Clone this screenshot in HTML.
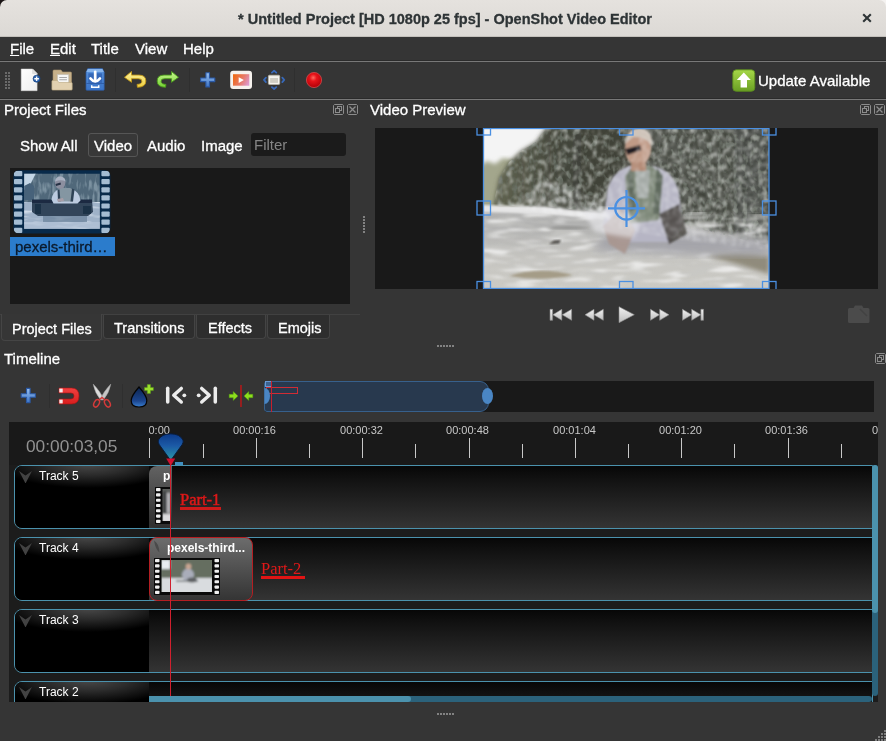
<!DOCTYPE html>
<html>
<head>
<meta charset="utf-8">
<title>* Untitled Project [HD 1080p 25 fps] - OpenShot Video Editor</title>
<style>
html,body{margin:0;padding:0;}
body{width:886px;height:741px;overflow:hidden;background:#353535;position:relative;font-family:"Liberation Sans",sans-serif;font-size:15px;color:#fff;}
.abs{position:absolute;}
.t{position:absolute;white-space:nowrap;line-height:1;-webkit-text-stroke:0.300px currentColor;will-change:transform;}
/* title bar */
#corner{left:0;top:0;width:886px;height:20px;background:linear-gradient(90deg,#1a1414 0,#1a1414 50%,#f4f2f0 50%);}
#titlebar{left:0;top:0;width:886px;height:37px;background:linear-gradient(#e5e2de,#dcd9d5);border-radius:7px 7px 0 0;border-bottom:1px solid #c3c0bb;box-sizing:border-box;}
#title{left:1.500px;width:886px;top:12px;text-align:center;font-weight:bold;font-size:14.500px;color:#2e3436;}
#close{left:858px;top:8px;font-size:20px;color:#2e3436;font-weight:bold;}
/* menu */
#menubar{left:0;top:37px;width:886px;height:24px;background:#353535;}
.menu{top:41px;font-size:15px;color:#fff;}
.hl{left:0;width:886px;height:1px;background:#787878;box-shadow:0 -1px 0 #2b2b2b;}
/* docks */
.dtitle{font-size:15px;color:#fff;}
#filesbox{left:10px;top:168px;width:340px;height:136px;background:#191919;}
#previewbox{left:375px;top:128px;width:503px;height:161px;background:#191919;}
.tab{position:absolute;top:316px;height:25px;box-sizing:border-box;border:1px solid #4a4a4a;border-top:none;font-size:14px;color:#fff;text-align:center;line-height:24px;background:#353535;}
/* timeline */
#tl .t{-webkit-text-stroke:0;}
#tl{left:9px;top:422px;width:869px;height:280px;background:#1c1c1c;overflow:hidden;}
#ruler{left:0;top:0;width:869px;height:43px;background:#191919;}
.rl{will-change:transform;position:absolute;top:2px;font-size:11px;color:#c8c8c8;white-space:nowrap;}
.tick{position:absolute;width:1px;background:#c8c8c8;}
.track{position:absolute;left:5px;width:859px;height:64px;box-sizing:border-box;border:1px solid #4b92ad;border-radius:8px 0 0 8px;background:linear-gradient(#070707 0%,#121212 22%,#343434 100%);}
.tname{position:absolute;left:0;top:0;width:134px;height:62px;background:radial-gradient(ellipse 90px 24px at 55% -2px,#4a4a4a 0,#2c2c2c 45%,#000 100%),#000;border-radius:7px 0 0 7px;}
.tname span{will-change:transform;position:absolute;left:24px;top:3px;font-size:12px;color:#fff;}
.tname i{position:absolute;left:4px;top:5px;width:13px;height:12px;background:#424242;clip-path:polygon(0 0,50% 38%,100% 0,52% 100%,48% 100%);}
.clip{position:absolute;box-sizing:border-box;border-radius:8px;background:linear-gradient(#6a6a6a,#2c2c2c);overflow:hidden;}
.note{will-change:transform;position:absolute;font-family:"Liberation Serif",serif;font-size:16.500px;color:#e01818;white-space:nowrap;line-height:1;}
</style>
</head>
<body>
<div class="abs" id="corner"></div>
<div class="abs" id="titlebar"></div>
<div class="t" id="title">* Untitled Project [HD 1080p 25 fps] - OpenShot Video Editor</div>
<svg class="abs" style="left:861px;top:12px" width="12" height="12" viewBox="0 0 12 12"><path d="M2.200 2.200l7.600 7.600M9.800 2.200l-7.600 7.600" stroke="#2e3436" stroke-width="2.100"/></svg>

<div class="abs" id="menubar"></div>
<div class="t menu" style="left:10px"><u>F</u>ile</div>
<div class="t menu" style="left:50px"><u>E</u>dit</div>
<div class="t menu" style="left:91px">Title</div>
<div class="t menu" style="left:135px">View</div>
<div class="t menu" style="left:183px">Help</div>
<div class="abs hl" style="top:61px"></div>
<div class="abs hl" style="top:99px"></div>

<!-- toolbar -->

<!-- toolbar grip -->
<svg class="abs" style="left:4px;top:71px" width="8" height="20" viewBox="0 0 8 20">
<g fill="#6a6a6a"><rect x="1" y="1" width="2" height="2"/><rect x="4" y="1" width="2" height="2"/><rect x="1" y="4" width="2" height="2"/><rect x="4" y="4" width="2" height="2"/><rect x="1" y="7" width="2" height="2"/><rect x="4" y="7" width="2" height="2"/><rect x="1" y="10" width="2" height="2"/><rect x="4" y="10" width="2" height="2"/><rect x="1" y="13" width="2" height="2"/><rect x="4" y="13" width="2" height="2"/><rect x="1" y="16" width="2" height="2"/><rect x="4" y="16" width="2" height="2"/></g></svg>
<!-- new -->
<svg class="abs" style="left:18px;top:67px" width="26" height="26" viewBox="0 0 26 26">
<defs><linearGradient id="gdoc" x1="0" y1="0" x2="1" y2="1"><stop offset="0" stop-color="#ffffff"/><stop offset="1" stop-color="#efefef"/></linearGradient></defs>
<path d="M3.200 2h11.400l4.500 4.500v17.200h-15.900z" fill="url(#gdoc)" stroke="#d8d8d8" stroke-width="0.500"/>
<path d="M14.600 2v4.500h4.500z" fill="#e0e0e0" stroke="#c8c8c8" stroke-width="0.400"/>
<circle cx="18.600" cy="11.700" r="3.500" fill="#2c62ac" stroke="#1a4684" stroke-width="0.700"/>
<path d="M16.300 11.700h4.600M18.600 9.400v4.600" stroke="#fff" stroke-width="1.400"/>
</svg>
<!-- open -->
<svg class="abs" style="left:50px;top:67px" width="26" height="26" viewBox="0 0 26 26">
<path d="M3 4q0-1 1-1h7l1.500 2h8q1 0 1 1v14h-18.500z" fill="#c7b18b" stroke="#a8926c" stroke-width="0.600"/>
<rect x="7.600" y="7.700" width="11" height="8.500" fill="#f6f6f4" stroke="#c4c4c0" stroke-width="0.500"/>
<path d="M9.300 10.500h7.600M9.300 12.800h7.600" stroke="#a8a8a8" stroke-width="1.100"/>
<path d="M1.900 14.300q0-0.800 0.800-0.800h4.800l1.300 2h12.600q0.800 0 0.800 0.800v6q0 0.800-0.800 0.800h-18.700q-0.800 0-0.800-0.800z" fill="#e2d1b0" stroke="#bba780" stroke-width="0.600"/>
</svg>
<!-- save -->
<svg class="abs" style="left:83px;top:67px" width="26" height="26" viewBox="0 0 26 26">
<defs><linearGradient id="gsave" x1="0" y1="0" x2="0" y2="1"><stop offset="0" stop-color="#5a94de"/><stop offset="1" stop-color="#3a74c6"/></linearGradient></defs>
<path d="M4.800 1.600h14.600l1.800 3.600v17.300q0 0.800-0.800 0.800h-16.600q-0.800 0-0.800-0.800v-17.300z" fill="url(#gsave)" stroke="#2c5aa4" stroke-width="0.700"/>
<path d="M4.800 1.900h14.600l1.500 3.100h-17.600z" fill="#86b4ec"/>
<rect x="5.300" y="6.300" width="13.800" height="9.600" fill="#3568b8"/>
<rect x="5.300" y="17.100" width="13.800" height="5" fill="#3f78ca"/>
<path d="M3.400 16.500h17.600" stroke="#2a56a0" stroke-width="0.800"/>
<path d="M12.200 4.800v9" stroke="#fff" stroke-width="2.700" stroke-linecap="round"/>
<path d="M7.400 11.400q4.800 6 9.600 0" fill="none" stroke="#fff" stroke-width="2.600" stroke-linecap="round"/>
<path d="M8.700 18.200v2.100h7v-2.100" fill="none" stroke="#fff" stroke-width="1.500"/>
</svg>
<div class="abs" style="left:115px;top:68px;width:1px;height:24px;background:#2f2f2f"></div>
<!-- undo -->
<svg class="abs" style="left:122px;top:67px" width="26" height="26" viewBox="0 0 26 26">
<defs><linearGradient id="gundo" x1="0" y1="0" x2="0" y2="1"><stop offset="0" stop-color="#fdf3a0"/><stop offset="1" stop-color="#efcf3e"/></linearGradient></defs>
<path d="M2.500 10.300l7-5.800v3.600h7.500q6.800 0 6.800 6q0 6-8.300 6.200l-0.400-2.900q4.800 0 4.800-3.300q0-2.400-3.700-2.400h-6.700v3.600z" fill="url(#gundo)" stroke="#c49a1a" stroke-width="0.900" stroke-linejoin="round"/>
</svg>
<!-- redo -->
<svg class="abs" style="left:155px;top:67px" width="26" height="26" viewBox="0 0 26 26">
<defs><linearGradient id="gredo" x1="0" y1="0" x2="0" y2="1"><stop offset="0" stop-color="#c9f790"/><stop offset="1" stop-color="#74d032"/></linearGradient></defs>
<path d="M23.500 10.300l-7-5.800v3.600h-7.500q-6.800 0-6.800 6q0 6 8.300 6.200l0.400-2.900q-4.800 0-4.800-3.300q0-2.400 3.700-2.400h6.700v3.600z" fill="url(#gredo)" stroke="#4c9c1c" stroke-width="0.900" stroke-linejoin="round"/>
</svg>
<div class="abs" style="left:189px;top:68px;width:1px;height:24px;background:#2f2f2f"></div>
<!-- plus -->
<svg class="abs" style="left:197px;top:69px" width="22" height="22" viewBox="0 0 22 22">
<defs><linearGradient id="gplus" x1="0" y1="0" x2="0" y2="1"><stop offset="0" stop-color="#98c0f0"/><stop offset="1" stop-color="#3d74c4"/></linearGradient></defs>
<path d="M8.900 3.700h3.600v5.300h5.300v3.600h-5.300v5.300h-3.600v-5.300h-5.300v-3.600h5.300z" fill="url(#gplus)" stroke="#2a58a4" stroke-width="1.100" stroke-linejoin="round"/>
</svg>
<!-- profile -->
<svg class="abs" style="left:228px;top:67px" width="26" height="26" viewBox="0 0 26 26">
<defs><linearGradient id="gprof" x1="0" y1="0.300" x2="1" y2="0.700"><stop offset="0" stop-color="#ee6a18"/><stop offset="0.550" stop-color="#e87a6a"/><stop offset="1" stop-color="#dd98cc"/></linearGradient></defs>
<rect x="2.200" y="3.700" width="21.800" height="18.200" rx="3" fill="#f6f2ee"/>
<rect x="5" y="7.200" width="16.300" height="11.500" fill="url(#gprof)"/>
<path d="M10.700 10.200v5.800l5.200-2.900z" fill="#fff"/>
</svg>
<!-- fullscreen -->
<svg class="abs" style="left:261px;top:67px" width="26" height="26" viewBox="0 0 26 26">
<rect x="7.400" y="8.200" width="11.300" height="9.300" rx="1" fill="#f0eee6" stroke="#b9b7ad" stroke-width="0.700"/>
<rect x="8.800" y="10.600" width="8.500" height="5.600" fill="#cfcdc4" stroke="#fff" stroke-width="0.600"/>
<g fill="none" stroke="#3768b8" stroke-width="1.800" stroke-linecap="round" stroke-linejoin="round">
<path d="M10.900 5.600l2.200-1.900l2.200 1.900"/><path d="M10.900 20.100l2.200 1.900l2.200-1.900"/><path d="M4.900 10.700l-1.900 2.200l1.900 2.200"/><path d="M21.300 10.700l1.900 2.200l-1.900 2.200"/></g>
</svg>
<div class="abs" style="left:294px;top:68px;width:1px;height:24px;background:#2f2f2f"></div>
<!-- record -->
<svg class="abs" style="left:303px;top:69px" width="22" height="22" viewBox="0 0 22 22">
<defs><radialGradient id="grec" cx="0.450" cy="0.350" r="0.650"><stop offset="0" stop-color="#ff6a60"/><stop offset="0.350" stop-color="#e8141a"/><stop offset="1" stop-color="#b00008"/></radialGradient></defs>
<circle cx="11" cy="11" r="7.600" fill="url(#grec)" stroke="#e05050" stroke-width="0.700"/>
</svg>
<!-- update -->
<svg class="abs" style="left:731px;top:68px" width="26" height="26" viewBox="0 0 26 26">
<defs><linearGradient id="gupd" x1="0" y1="0" x2="0" y2="1"><stop offset="0" stop-color="#a6d848"/><stop offset="1" stop-color="#6a9f24"/></linearGradient></defs>
<rect x="1.800" y="1.800" width="22" height="21.500" rx="3.500" fill="url(#gupd)" stroke="#5a8a1e" stroke-width="0.900"/>
<path d="M12.800 4.500l7 7.500h-3.800v7.500h-6.400v-7.500h-3.800z" fill="#fff"/>
</svg>

<div class="t" style="left:758px;top:73px;font-size:15px">Update Available</div>

<!-- Project files dock -->
<div class="t dtitle" style="left:4px;top:102px">Project Files</div>
<div class="t dtitle" style="left:370px;top:102px">Video Preview</div>
<div class="t" style="left:20px;top:138px">Show All</div>
<div class="abs" style="left:88px;top:133px;width:50px;height:24px;box-sizing:border-box;border:1px solid #565656;border-radius:3px;background:#383838"></div>
<div class="t" style="left:94px;top:138px">Video</div>
<div class="t" style="left:147px;top:138px">Audio</div>
<div class="t" style="left:201px;top:138px">Image</div>
<div class="abs" style="left:251px;top:133px;width:95px;height:23px;background:#1b1b1b;border-radius:3px"></div>
<div class="t" style="left:254px;top:137px;font-size:15px;color:#858585;-webkit-text-stroke:0">Filter</div>
<div class="abs" id="filesbox"></div>
<!-- THUMB --><svg class="abs" style="left:13px;top:170px" width="98" height="64" viewBox="0 0 98 64">
<defs><clipPath id="tc"><rect x="0.400" y="0.200" width="97" height="63.300" rx="5.500"/></clipPath><clipPath id="tci"><rect x="11.200" y="3.800" width="75.600" height="55"/></clipPath>
<filter id="tb1" x="-10%" y="-10%" width="120%" height="120%"><feGaussianBlur stdDeviation="0.650"/></filter>
<filter id="tb2" x="-10%" y="-10%" width="120%" height="120%"><feGaussianBlur stdDeviation="2"/></filter>
<filter id="twave" x="0" y="0" width="100%" height="100%"><feTurbulence type="fractalNoise" baseFrequency="0.05 0.25" numOctaves="2" seed="4"/><feColorMatrix type="matrix" values="0 0 0 0 0.80  0 0 0 0 0.86  0 0 0 0 0.93  3 3 0 0 -3"/><feGaussianBlur stdDeviation="0.500"/></filter>
<filter id="ttree" x="0" y="0" width="100%" height="100%"><feTurbulence type="fractalNoise" baseFrequency="0.25 0.08" numOctaves="2" seed="9"/><feColorMatrix type="matrix" values="0 0 0 0 0.24  0 0 0 0 0.33  0 0 0 0 0.40  3 3 0 0 -2.9"/><feGaussianBlur stdDeviation="0.500"/></filter>
</defs>
<g clip-path="url(#tc)"><rect width="98" height="64" fill="#082a4a"/><rect x="1" y="1.0" width="8.300" height="5.200" rx="1" fill="#a4bcd2"/><rect x="88.400" y="1.0" width="8.300" height="5.200" rx="1" fill="#a4bcd2"/><rect x="1" y="9.1" width="8.300" height="5.200" rx="1" fill="#a4bcd2"/><rect x="88.400" y="9.1" width="8.300" height="5.200" rx="1" fill="#a4bcd2"/><rect x="1" y="17.2" width="8.300" height="5.200" rx="1" fill="#a4bcd2"/><rect x="88.400" y="17.2" width="8.300" height="5.200" rx="1" fill="#a4bcd2"/><rect x="1" y="25.3" width="8.300" height="5.200" rx="1" fill="#a4bcd2"/><rect x="88.400" y="25.3" width="8.300" height="5.200" rx="1" fill="#a4bcd2"/><rect x="1" y="33.4" width="8.300" height="5.200" rx="1" fill="#a4bcd2"/><rect x="88.400" y="33.4" width="8.300" height="5.200" rx="1" fill="#a4bcd2"/><rect x="1" y="41.5" width="8.300" height="5.200" rx="1" fill="#a4bcd2"/><rect x="88.400" y="41.5" width="8.300" height="5.200" rx="1" fill="#a4bcd2"/><rect x="1" y="49.6" width="8.300" height="5.200" rx="1" fill="#a4bcd2"/><rect x="88.400" y="49.6" width="8.300" height="5.200" rx="1" fill="#a4bcd2"/><rect x="1" y="57.7" width="8.300" height="5.200" rx="1" fill="#a4bcd2"/><rect x="88.400" y="57.7" width="8.300" height="5.200" rx="1" fill="#a4bcd2"/>
<g clip-path="url(#tci)">
<rect x="11" y="3" width="77" height="57" fill="#50687a"/>
<rect x="11" y="3" width="77" height="30" filter="url(#ttree)" opacity="0.800"/>
<path d="M11 3h12l-3 6l-4 8l-5 3z" fill="#c4d6e6" filter="url(#tb1)"/>
<path d="M11 16l6-3l4 3v14h-10z" fill="#46627a" filter="url(#tb1)"/>
<rect x="11" y="32" width="77" height="28" fill="#9fb2c8"/>
<rect x="11" y="32" width="77" height="28" filter="url(#twave)" opacity="0.700"/>
<path d="M11 52h77v8h-77z" fill="#b4c4d8" opacity="0.700" filter="url(#tb1)"/>
<g filter="url(#tb1)">
<path d="M19 30h60l1 12l-5 4h-50l-6-4z" fill="#30445a"/>
<path d="M19 29.500h60v3.500h-60z" fill="#1a2c42"/>
<path d="M22 34h6v10h-6zM70 36h8v8h-8z" fill="#1e3046"/>
<path d="M30 46h44v6h-44z" fill="#6a8098" opacity="0.700"/>
<g transform="translate(0 3.500)"><path d="M38.500 26q1-8 8-10.500h12q8 2.500 9 11.500l-3 3h-24z" fill="#bccbe0"/>
<path d="M45 16l3-1.500h9l3 1.500v12h-15z" fill="#8496a2"/>
<path d="M44.500 16l2 0l1 12h-2.500zM59 15l2.500 1l-1.500 12h-2.500z" fill="#2e4256"/>
<ellipse cx="47.200" cy="9.300" rx="5.200" ry="6.200" fill="#8c8f9f"/>
<path d="M42 8q1-5.500 6-5q4.500 1 4.500 5q-4-2.500-10.500 0z" fill="#aab2c2"/>
<path d="M42.500 10.500l5-1.500l0.500 2l-5 1.500z" fill="#263044"/>
<path d="M44 25.500l6-1l1 3l-6 1z" fill="#a79ea8"/></g>
</g></g></g></svg><!-- /THUMB -->
<div class="abs" style="left:10px;top:237px;width:105px;height:19px;background:#2b7ccc"></div>
<div class="t" style="left:15px;top:239px;color:#0b1a2b">pexels-third…</div>

<div class="abs" id="previewbox"></div>
<!-- VIDEO --><svg class="abs" style="left:483px;top:128px" width="286" height="160" viewBox="0 0 286 160">
<defs>
<filter id="vb2" x="-5%" y="-5%" width="110%" height="110%"><feGaussianBlur stdDeviation="2"/></filter>
<filter id="vb1" x="-5%" y="-5%" width="110%" height="110%"><feGaussianBlur stdDeviation="1"/></filter>
<filter id="vb4" x="-10%" y="-10%" width="120%" height="120%"><feGaussianBlur stdDeviation="4"/></filter>
<filter id="leaf" x="0" y="0" width="100%" height="100%">
  <feTurbulence type="fractalNoise" baseFrequency="0.2 0.16" numOctaves="2" seed="7" result="n"/>
  <feColorMatrix in="n" type="matrix" values="0 0 0 0 0.64  0 0 0 0 0.66  0 0 0 0 0.62  3.2 3.2 0 0 -3.2"/>
  <feGaussianBlur stdDeviation="0.8"/>
</filter>
<filter id="leaf2" x="0" y="0" width="100%" height="100%">
  <feTurbulence type="fractalNoise" baseFrequency="0.3 0.2" numOctaves="2" seed="23" result="n"/>
  <feColorMatrix in="n" type="matrix" values="0 0 0 0 0.90  0 0 0 0 0.91  0 0 0 0 0.92  2.8 2.8 0 0 -2.55"/>
  <feGaussianBlur stdDeviation="0.8"/>
</filter>
<filter id="leafd" x="0" y="0" width="100%" height="100%">
  <feTurbulence type="fractalNoise" baseFrequency="0.2 0.14" numOctaves="2" seed="3" result="n"/>
  <feColorMatrix in="n" type="matrix" values="0 0 0 0 0.15  0 0 0 0 0.17  0 0 0 0 0.14  -3 -3 0 0 3.1"/>
  <feGaussianBlur stdDeviation="0.7"/>
</filter>
<filter id="wave" x="0" y="0" width="100%" height="100%">
  <feTurbulence type="fractalNoise" baseFrequency="0.03 0.16" numOctaves="3" seed="11" result="n"/>
  <feColorMatrix in="n" type="matrix" values="0 0 0 0 0.58  0 0 0 0 0.58  0 0 0 0 0.56  3.5 2.5 0 0 -2.9"/>
  <feGaussianBlur stdDeviation="0.8"/>
</filter>
<filter id="wavel" x="0" y="0" width="100%" height="100%">
  <feTurbulence type="fractalNoise" baseFrequency="0.035 0.2" numOctaves="2" seed="5" result="n"/>
  <feColorMatrix in="n" type="matrix" values="0 0 0 0 0.96  0 0 0 0 0.96  0 0 0 0 0.96  -4 -2 0 0 2.9"/>
  <feGaussianBlur stdDeviation="0.8"/>
</filter>
<linearGradient id="gwater" x1="0" y1="0" x2="0" y2="1"><stop offset="0" stop-color="#b0b0b0"/><stop offset="0.620" stop-color="#b2b2b1"/><stop offset="0.820" stop-color="#c6c5c1"/><stop offset="1" stop-color="#cccbc5"/></linearGradient>
<linearGradient id="gfol" x1="0" y1="0" x2="1" y2="0"><stop offset="0" stop-color="#626552"/><stop offset="0.250" stop-color="#42443a"/><stop offset="0.700" stop-color="#3c3f38"/><stop offset="1" stop-color="#3e403b"/></linearGradient>
<clipPath id="vclip"><rect x="0" y="0" width="286" height="160"/></clipPath>
<clipPath id="folclip"><path d="M10 78L16 50L26 34L38 23L53 14L64 0H286V118L230 104L200 96L130 86L60 78z"/></clipPath>
<clipPath id="splclip"><path d="M100 80L150 30L160 0H286V122L200 112L130 100z"/></clipPath>
<clipPath id="splclip2"><path d="M30 78L60 50L90 60L120 76L130 92L60 84z"/></clipPath>
</defs>
<g clip-path="url(#vclip)">
<rect width="286" height="160" fill="url(#gwater)"/>
<!-- sky -->
<rect x="0" y="0" width="90" height="44" fill="#f4f4f4"/>
<!-- distant trees -->
<path d="M-4 38L4 33L12 36L20 30L30 32L40 80L-4 80z" fill="#a3a68c" filter="url(#vb2)"/>
<!-- foliage -->
<g filter="url(#vb2)"><path d="M10 80L16 50L26 34L38 23L53 14L66 -4H290V116L240 104L200 95L130 85L60 79z" fill="url(#gfol)"/></g>
<g clip-path="url(#folclip)"><rect width="286" height="120" filter="url(#leafd)" opacity="0.800"/><rect width="286" height="120" filter="url(#leaf)" opacity="0.600"/></g>
<!-- waterline foam at left -->
<path d="M0 77L60 79L130 87L130 92L60 86L0 84z" fill="#e6e6e6" filter="url(#vb1)"/>
<!-- water texture -->
<rect x="0" y="86" width="286" height="74" filter="url(#wave)" opacity="0.700"/>
<rect x="0" y="84" width="286" height="76" filter="url(#wavel)" opacity="0.650"/>
<path d="M26 148Q56 138 90 147Q60 154 26 148z" fill="#a39a84" filter="url(#vb1)" opacity="0.950"/>
<path d="M225 128Q255 122 286 128V146Q255 136 225 128z" fill="#8a8575" filter="url(#vb2)" opacity="0.900"/>
<path d="M66 116l5-3.500l7-0.500l-2 3.500z" fill="#4e4b46" filter="url(#vb1)"/><path d="M62 100q22-4 46 0q-22 3-46 0z" fill="#8e8e8c" filter="url(#vb1)" opacity="0.800"/>
<!-- splash haze right -->
<path d="M110 122L130 100L200 104L286 112V128L200 126z" fill="#a2a2a8" opacity="0.900" filter="url(#vb4)"/>
<!-- man -->
<g filter="url(#vb1)">
<path d="M124 64Q128 44 146 38L170 38Q190 42 196 64L200 98L188 114L136 114L120 98z" fill="#b6b5c4"/>
<path d="M142 48L149 38L169 38L180 48L176 92L146 96z" fill="#7a8574"/>
<path d="M152 42L167 42L165 70L154 70z" fill="#a3a9a5"/>
<path d="M144 46l5-7l4 42l-6 2zM174 39l6 9l-4 38l-6 0z" fill="#586456"/>
<ellipse cx="155" cy="20" rx="13" ry="18" fill="#c09a86"/>
<path d="M142 16Q143 0 157 0Q170 1 169 18Q163 8 150 9z" fill="#cfc4ba"/>
<path d="M142 21l15-4l1.500 5l-14 5z" fill="#201e22"/>
<path d="M148 34h15v9h-15z" fill="#b08670"/>
<path d="M120 98L138 80L152 102L142 126L126 116z" fill="#a8968f" opacity="0.900"/>
<path d="M176 86L196 76L204 106L186 116z" fill="#423e3a" opacity="0.850"/>
</g>
<!-- splashes -->
<g filter="url(#vb1)"><g clip-path="url(#splclip)"><rect width="286" height="125" filter="url(#leaf2)" opacity="0.360"/></g></g>
<g filter="url(#vb1)"><g clip-path="url(#splclip2)"><rect width="286" height="125" filter="url(#leaf2)" opacity="0.750"/></g></g>
<path d="M100 84Q135 72 158 96L150 110L112 104z" fill="#ececf0" opacity="0.600" filter="url(#vb2)"/>
</g>
</svg>
<!-- /VIDEO -->
<!-- HANDLES --><svg class="abs" style="left:375px;top:128px" width="500" height="161" viewBox="0 0 500 161">
<g fill="none" stroke="#4a90e2" stroke-width="1.300">
<rect x="108.500" y="0.500" width="285.500" height="160"/>
<rect x="102" y="-7" width="13.500" height="14"/><rect x="244.500" y="-7" width="13.500" height="14"/><rect x="387.500" y="-7" width="13.500" height="14"/>
<rect x="102" y="73" width="13.500" height="14"/><rect x="387.500" y="73" width="13.500" height="14"/>
<rect x="102" y="153.500" width="13.500" height="14"/><rect x="244.500" y="153.500" width="13.500" height="14"/><rect x="387.500" y="153.500" width="13.500" height="14"/>
</g>
<g fill="none" stroke="#4a90e2" stroke-width="2.200">
<circle cx="251.500" cy="80.300" r="11.300"/><path d="M233 80.300h37M251.500 62v37"/>
</g>
</svg>
<!-- /HANDLES -->

<svg class="abs" style="left:333px;top:104px" width="11" height="11" viewBox="0 0 11 11"><path d="M1.500 0.500h8l1 1v8l-1 1h-8l-1-1v-8z" fill="none" stroke="#8c8c8c" stroke-width="1"/><rect x="4.500" y="2.500" width="4" height="4" fill="none" stroke="#8c8c8c"/><rect x="2.500" y="4.500" width="4" height="4" fill="#353535" stroke="#8c8c8c"/></svg><svg class="abs" style="left:347px;top:104px" width="11" height="11" viewBox="0 0 11 11"><path d="M1.500 0.500h8l1 1v8l-1 1h-8l-1-1v-8z" fill="none" stroke="#8c8c8c" stroke-width="1"/><path d="M2.500 2.500l6 6M8.500 2.500l-6 6" stroke="#8c8c8c" stroke-width="1.300"/></svg><svg class="abs" style="left:860px;top:104px" width="11" height="11" viewBox="0 0 11 11"><path d="M1.500 0.500h8l1 1v8l-1 1h-8l-1-1v-8z" fill="none" stroke="#8c8c8c" stroke-width="1"/><rect x="4.500" y="2.500" width="4" height="4" fill="none" stroke="#8c8c8c"/><rect x="2.500" y="4.500" width="4" height="4" fill="#353535" stroke="#8c8c8c"/></svg><svg class="abs" style="left:874px;top:104px" width="11" height="11" viewBox="0 0 11 11"><path d="M1.500 0.500h8l1 1v8l-1 1h-8l-1-1v-8z" fill="none" stroke="#8c8c8c" stroke-width="1"/><path d="M2.500 2.500l6 6M8.500 2.500l-6 6" stroke="#8c8c8c" stroke-width="1.300"/></svg><svg class="abs" style="left:875px;top:353px" width="11" height="11" viewBox="0 0 11 11"><path d="M1.500 0.500h8l1 1v8l-1 1h-8l-1-1v-8z" fill="none" stroke="#8c8c8c" stroke-width="1"/><rect x="4.500" y="2.500" width="4" height="4" fill="none" stroke="#8c8c8c"/><rect x="2.500" y="4.500" width="4" height="4" fill="#353535" stroke="#8c8c8c"/></svg><svg class="abs" style="left:437px;top:345px" width="18" height="2" viewBox="0 0 18 2"><g fill="#828282"><rect x="0" y="0" width="2" height="2"/><rect x="3" y="0" width="2" height="2"/><rect x="6" y="0" width="2" height="2"/><rect x="9" y="0" width="2" height="2"/><rect x="12" y="0" width="2" height="2"/><rect x="15" y="0" width="2" height="2"/></g></svg><svg class="abs" style="left:437px;top:713px" width="18" height="2" viewBox="0 0 18 2"><g fill="#828282"><rect x="0" y="0" width="2" height="2"/><rect x="3" y="0" width="2" height="2"/><rect x="6" y="0" width="2" height="2"/><rect x="9" y="0" width="2" height="2"/><rect x="12" y="0" width="2" height="2"/><rect x="15" y="0" width="2" height="2"/></g></svg><svg class="abs" style="left:363px;top:216px" width="2" height="18" viewBox="0 0 2 18"><g fill="#828282"><rect y="0" x="0" width="2" height="2"/><rect y="3" x="0" width="2" height="2"/><rect y="6" x="0" width="2" height="2"/><rect y="9" x="0" width="2" height="2"/><rect y="12" x="0" width="2" height="2"/><rect y="15" x="0" width="2" height="2"/></g></svg>
<svg class="abs" style="left:545px;top:302px" width="165" height="26" viewBox="0 0 165 26">
<defs><linearGradient id="gpb" x1="0" y1="0" x2="0" y2="1"><stop offset="0" stop-color="#f2f2f2"/><stop offset="1" stop-color="#bdbdbd"/></linearGradient></defs>
<g fill="url(#gpb)" stroke="#8a8a8a" stroke-width="0.600" stroke-linejoin="round">
<rect x="5" y="7.300" width="2.600" height="11"/><path d="M16.800 7.300v11l-9-5.500z"/><path d="M26.600 7.300v11l-9.400-5.500z"/>
<path d="M49 7.300v11l-9-5.500z"/><path d="M58.300 7.300v11l-9.300-5.500z"/>
<path d="M74 4.700v16l15.300-8z"/>
<path d="M105.500 7.300v11l9-5.500z"/><path d="M114.700 7.300v11l9.300-5.500z"/>
<path d="M137.500 7.300v11l9.200-5.500z"/><path d="M146.700 7.300v11l9.200-5.500z"/><rect x="155.900" y="7.300" width="2.600" height="11"/>
</g></svg>
<svg class="abs" style="left:846px;top:304px" width="26" height="22" viewBox="0 0 26 22">
<path d="M2 5.500q0-1.500 1.500-1.500h4l1.500-2.500h7l1.500 2.500h4.500q1.500 0 1.500 1.500v12q0 1.500-1.500 1.500h-18.500q-1.500 0-1.500-1.500z" fill="#4b4b4b"/>
<path d="M14 5l7 7" stroke="#424242" stroke-width="1.500"/>
</svg>

<!-- tabs -->
<div class="abs" style="left:0;top:314px;width:360px;height:1px;background:#414141"></div>
<div class="abs" style="left:1px;top:314px;width:101px;height:27px;box-sizing:border-box;border:1px solid #454545;border-top:none;border-radius:0 0 4px 4px;background:#363636"></div>
<div class="abs" style="left:103px;top:315px;width:92px;height:24px;box-sizing:border-box;border:1px solid #444;border-top:none;border-radius:0 0 4px 4px;background:#2e2e2e"></div>
<div class="abs" style="left:196px;top:315px;width:70px;height:24px;box-sizing:border-box;border:1px solid #444;border-top:none;border-radius:0 0 4px 4px;background:#2e2e2e"></div>
<div class="abs" style="left:267px;top:315px;width:63px;height:24px;box-sizing:border-box;border:1px solid #444;border-top:none;border-radius:0 0 4px 4px;background:#2e2e2e"></div>
<div class="t" style="left:12px;top:322px;font-size:14.500px">Project Files</div>
<div class="t" style="left:114px;top:321px;font-size:14.500px">Transitions</div>
<div class="t" style="left:208px;top:321px;font-size:14.500px">Effects</div>
<div class="t" style="left:278px;top:321px;font-size:14.500px">Emojis</div>

<div class="t dtitle" style="left:4px;top:351px">Timeline</div>

<!-- timeline toolbar -->
<svg class="abs" style="left:17px;top:384px" width="22" height="22" viewBox="0 0 22 22">
<path d="M9.500 4.400h3.600v5.300h5.300v3.600h-5.300v5.300h-3.600v-5.300h-5.300v-3.600h5.300z" fill="url(#gplus)" stroke="#2a58a4" stroke-width="1.100" stroke-linejoin="round"/>
</svg>
<div class="abs" style="left:49px;top:384px;width:1px;height:24px;background:#2f2f2f"></div>
<svg class="abs" style="left:56px;top:384px" width="26" height="24" viewBox="0 0 26 24">
<defs><linearGradient id="gmag" x1="0" y1="0" x2="0" y2="1"><stop offset="0" stop-color="#f04040"/><stop offset="1" stop-color="#d81e1e"/></linearGradient></defs>
<path d="M3 4h12.500q7.500 0 7.500 8q0 8-7.500 8h-12.500v-5h12q3 0 3-3q0-3-3-3h-12z" fill="url(#gmag)" stroke="#b01010" stroke-width="0.600"/>
<rect x="3.300" y="4.600" width="3.400" height="3.800" fill="#f4eaea"/><rect x="3.300" y="15.600" width="3.400" height="3.800" fill="#f4eaea"/>
</svg>
<svg class="abs" style="left:90px;top:382px" width="24" height="28" viewBox="0 0 24 28">
<path d="M3.200 2q7.500 8 10.300 14.700l-2.600 1.500q-6.400-7.400-7.700-16.200z" fill="#dcdcdc" stroke="#9a9a9a" stroke-width="0.500"/>
<path d="M20.800 2q-7.500 8-10.300 14.700l2.600 1.500q6.400-7.400 7.700-16.200z" fill="#c6c6c6" stroke="#9a9a9a" stroke-width="0.500"/>
<ellipse cx="6.600" cy="21.300" rx="2.500" ry="4" transform="rotate(28 6.600 21.300)" fill="none" stroke="#d43a3a" stroke-width="1.500"/>
<ellipse cx="17.400" cy="21.300" rx="2.500" ry="4" transform="rotate(-28 17.400 21.300)" fill="none" stroke="#d43a3a" stroke-width="1.500"/>
<path d="M9.500 17.500l2.500-2l2.500 2" fill="none" stroke="#d43a3a" stroke-width="1.500"/>
</svg>
<div class="abs" style="left:122px;top:384px;width:1px;height:24px;background:#2f2f2f"></div>
<svg class="abs" style="left:128px;top:382px" width="28" height="28" viewBox="0 0 28 28">
<defs><linearGradient id="gdrop" x1="0" y1="0" x2="0" y2="1"><stop offset="0" stop-color="#0c2450"/><stop offset="0.700" stop-color="#1c468f"/><stop offset="1" stop-color="#3a7fd0"/></linearGradient></defs>
<path d="M11 5q-7.800 9-7.800 13.500q0 6.500 7.800 6.500q7.800 0 7.800-6.500q0-4.500-7.800-13.500z" fill="url(#gdrop)" stroke="#050505" stroke-width="1.200"/>
<path d="M19.300 2.600h3.200v2.800h2.900v3.200h-2.900v2.800h-3.200v-2.800h-2.800v-3.200h2.800z" fill="#9be02e" stroke="#5a9a14" stroke-width="0.500"/>
</svg>
<svg class="abs" style="left:163px;top:384px" width="58" height="22" viewBox="0 0 58 22">
<g stroke="#ececec" fill="none" stroke-linecap="round" stroke-linejoin="round">
<path d="M4.700 4.300v13.800" stroke-width="3.500"/><path d="M18.300 4.400l-7.600 6.800l7.600 6.800" stroke-width="3.400"/>
<path d="M52.300 4.300v13.800" stroke-width="3.500"/><path d="M38.700 4.400l7.600 6.800l-7.600 6.800" stroke-width="3.400"/></g>
<circle cx="21.300" cy="11.300" r="1.900" fill="#ececec"/><circle cx="35.700" cy="11.300" r="1.900" fill="#ececec"/>
</svg>
<svg class="abs" style="left:227px;top:384px" width="28" height="24" viewBox="0 0 28 24">
<path d="M14 1v22" stroke="#cc1414" stroke-width="1.300"/>
<path d="M2.200 10.300h4v-2.800l4.800 4.500l-4.800 4.500v-2.800h-4z" fill="#8ede1e" stroke="#4e9a0e" stroke-width="0.500"/>
<path d="M25.800 10.300h-4v-2.800l-4.800 4.500l4.800 4.500v-2.800h4z" fill="#8ede1e" stroke="#4e9a0e" stroke-width="0.500"/>
</svg>
<!-- zoom slider -->
<div class="abs" style="left:265px;top:381px;width:609px;height:31px;background:#191919"></div>
<div class="abs" style="left:264px;top:381px;width:225px;height:31px;box-sizing:border-box;background:#28394e;border:1px solid #37608c;border-radius:3px 9px 9px 3px"></div>
<div class="abs" style="left:265px;top:381px;width:7px;height:6px;box-sizing:border-box;background:#3d6391;border:1px solid #6a9ad4"></div>
<div class="abs" style="left:266px;top:387px;width:32px;height:7px;box-sizing:border-box;border:1px solid #d02c34"></div>
<div class="abs" style="left:259px;top:388px;width:11px;height:16px;border-radius:50%;background:#4a86c4;clip-path:inset(0 0 0 5.500px)"></div>
<div class="abs" style="left:482px;top:388px;width:11px;height:16px;border-radius:50%;background:#4a86c4"></div>
<div class="abs" style="left:271px;top:381px;width:1px;height:31px;background:#c8202c"></div>


<!-- timeline webview -->
<div class="abs" id="tl">
  <div class="abs" id="ruler"></div>
<div class="abs" id="rulerclip" style="left:140px;top:0;width:729px;height:43px;overflow:hidden"><div class="abs" style="left:-140px;top:0"><div class="rl" style="left:118.1px;width:43px;text-align:center">00:00:00</div><div class="tick" style="left:140px;top:16px;height:20px"></div>
<div class="tick" style="left:194px;top:22px;height:14px"></div>
<div class="rl" style="left:224.4px;width:43px;text-align:center">00:00:16</div><div class="tick" style="left:247px;top:16px;height:20px"></div>
<div class="tick" style="left:300px;top:22px;height:14px"></div>
<div class="rl" style="left:330.8px;width:43px;text-align:center">00:00:32</div><div class="tick" style="left:353px;top:16px;height:20px"></div>
<div class="tick" style="left:406px;top:22px;height:14px"></div>
<div class="rl" style="left:437.1px;width:43px;text-align:center">00:00:48</div><div class="tick" style="left:460px;top:16px;height:20px"></div>
<div class="tick" style="left:513px;top:22px;height:14px"></div>
<div class="rl" style="left:543.5px;width:43px;text-align:center">00:01:04</div><div class="tick" style="left:566px;top:16px;height:20px"></div>
<div class="tick" style="left:619px;top:22px;height:14px"></div>
<div class="rl" style="left:649.9px;width:43px;text-align:center">00:01:20</div><div class="tick" style="left:672px;top:16px;height:20px"></div>
<div class="tick" style="left:725px;top:22px;height:14px"></div>
<div class="rl" style="left:756.2px;width:43px;text-align:center">00:01:36</div><div class="tick" style="left:779px;top:16px;height:20px"></div>
<div class="tick" style="left:832px;top:22px;height:14px"></div>
<div class="rl" style="left:862.5px;width:43px;text-align:center">00:01:52</div><div class="tick" style="left:885px;top:16px;height:20px"></div>
<div class="tick" style="left:938px;top:22px;height:14px"></div>
</div></div>
<div class="t" style="left:17px;top:16px;font-size:17.300px;color:#929292">00:00:03,05</div>
  <div class="track" style="top:43px"><div class="tname"><i></i><span>Track 5</span></div></div>
  <div class="track" style="top:115px"><div class="tname"><i></i><span>Track 4</span></div></div>
  <div class="track" style="top:187px"><div class="tname"><i></i><span>Track 3</span></div></div>
  <div class="track" style="top:259px"><div class="tname"><i></i><span>Track 2</span></div></div>
  <div class="clip" style="left:140px;top:44px;width:23px;height:62px;border-radius:8px 0 0 8px;background:linear-gradient(#626262,#2e2e2e)"></div>
  <div class="t" style="left:154px;top:48px;font-size:12px;font-weight:bold;color:#fff;width:8px;overflow:hidden">p.</div>
  <div class="abs" style="left:146px;top:65px;width:16px;height:37px;overflow:hidden"><svg class="abs" style="left:0px;top:0px" width="66" height="37" viewBox="0 0 66 37"><rect x="0" y="0" width="66" height="37" fill="#0a0a0a"/><rect x="1" y="1.06" width="4.5" height="3.17" rx="0.800" fill="#f0f0f0"/><rect x="60.5" y="1.06" width="4.5" height="3.17" rx="0.800" fill="#f0f0f0"/><rect x="1" y="6.34" width="4.5" height="3.17" rx="0.800" fill="#f0f0f0"/><rect x="60.5" y="6.34" width="4.5" height="3.17" rx="0.800" fill="#f0f0f0"/><rect x="1" y="11.63" width="4.5" height="3.17" rx="0.800" fill="#f0f0f0"/><rect x="60.5" y="11.63" width="4.5" height="3.17" rx="0.800" fill="#f0f0f0"/><rect x="1" y="16.91" width="4.5" height="3.17" rx="0.800" fill="#f0f0f0"/><rect x="60.5" y="16.91" width="4.5" height="3.17" rx="0.800" fill="#f0f0f0"/><rect x="1" y="22.20" width="4.5" height="3.17" rx="0.800" fill="#f0f0f0"/><rect x="60.5" y="22.20" width="4.5" height="3.17" rx="0.800" fill="#f0f0f0"/><rect x="1" y="27.49" width="4.5" height="3.17" rx="0.800" fill="#f0f0f0"/><rect x="60.5" y="27.49" width="4.5" height="3.17" rx="0.800" fill="#f0f0f0"/><rect x="1" y="32.77" width="4.5" height="3.17" rx="0.800" fill="#f0f0f0"/><rect x="60.5" y="32.77" width="4.5" height="3.17" rx="0.800" fill="#f0f0f0"/><defs><clipPath id="c5"><rect x="7.500" y="2" width="50.500" height="32"/></clipPath></defs>
<g clip-path="url(#c5)"><rect x="7.500" y="2" width="50.500" height="32" fill="#6a6a68"/>
<g filter="url(#b1)"><rect x="7" y="0" width="12" height="36" fill="#5c5f5c"/><rect x="12" y="6" width="3" height="20" fill="#b8b8bc"/><rect x="7" y="27" width="14" height="8" fill="#dcdcde"/><rect x="8" y="4" width="3" height="22" fill="#3a3d3f"/></g></g></svg></div>
  <div class="clip" style="left:140px;top:115px;width:104px;height:64px;border:1px solid #b41e22;background:linear-gradient(#6c6c6c,#343434)"></div>
  <svg class="abs" style="left:144px;top:118px" width="8" height="13" viewBox="0 0 8 13"><path d="M1 0.500q5 3 5.500 12q-4-3-5.500-12z" fill="#4a4a4a"/></svg>
  <div class="t" style="left:158px;top:120px;font-size:12px;font-weight:bold;color:#fff">pexels-third...</div>
  <svg class="abs" style="left:145px;top:136px" width="66" height="37" viewBox="0 0 66 37"><rect x="0" y="0" width="66" height="37" fill="#0a0a0a"/><rect x="1" y="1.06" width="4.5" height="3.17" rx="0.800" fill="#f0f0f0"/><rect x="60.5" y="1.06" width="4.5" height="3.17" rx="0.800" fill="#f0f0f0"/><rect x="1" y="6.34" width="4.5" height="3.17" rx="0.800" fill="#f0f0f0"/><rect x="60.5" y="6.34" width="4.5" height="3.17" rx="0.800" fill="#f0f0f0"/><rect x="1" y="11.63" width="4.5" height="3.17" rx="0.800" fill="#f0f0f0"/><rect x="60.5" y="11.63" width="4.5" height="3.17" rx="0.800" fill="#f0f0f0"/><rect x="1" y="16.91" width="4.5" height="3.17" rx="0.800" fill="#f0f0f0"/><rect x="60.5" y="16.91" width="4.5" height="3.17" rx="0.800" fill="#f0f0f0"/><rect x="1" y="22.20" width="4.5" height="3.17" rx="0.800" fill="#f0f0f0"/><rect x="60.5" y="22.20" width="4.5" height="3.17" rx="0.800" fill="#f0f0f0"/><rect x="1" y="27.49" width="4.5" height="3.17" rx="0.800" fill="#f0f0f0"/><rect x="60.5" y="27.49" width="4.5" height="3.17" rx="0.800" fill="#f0f0f0"/><rect x="1" y="32.77" width="4.5" height="3.17" rx="0.800" fill="#f0f0f0"/><rect x="60.5" y="32.77" width="4.5" height="3.17" rx="0.800" fill="#f0f0f0"/><defs><filter id="b1" x="-10%" y="-10%" width="120%" height="120%"><feGaussianBlur stdDeviation="1.2"/></filter>
<clipPath id="c4"><rect x="7.500" y="2" width="50.500" height="32"/></clipPath></defs>
<g clip-path="url(#c4)"><rect x="7.500" y="2" width="50.500" height="32" fill="#8f9a8c"/>
<g filter="url(#b1)"><rect x="7" y="0" width="52" height="20" fill="#656e60"/><rect x="7" y="2" width="9" height="9" fill="#e8ecf0"/>
<rect x="7" y="20" width="52" height="16" fill="#d9dcdf"/><ellipse cx="34" cy="17" rx="6" ry="6.500" fill="#a9adba"/><ellipse cx="34.500" cy="8.500" rx="2.800" ry="3" fill="#c7a592"/>
<rect x="22" y="22" width="22" height="2" fill="#8a8f92"/><ellipse cx="38" cy="22" rx="5" ry="2.500" fill="#5b5f62"/></g></g></svg>
  <div class="note" style="left:171px;top:70px;-webkit-text-stroke:0.500px #d81818">Part-1</div><div class="abs" style="left:171px;top:85px;width:41px;height:3px;background:#cc1a1a"></div>
  <div class="note" style="left:252px;top:138.500px">Part-2</div><div class="abs" style="left:252px;top:154px;width:44px;height:2.500px;background:#e01414"></div>

  <div class="abs" style="left:166px;top:40px;width:8px;height:3px;background:#3f8fc0"></div>
  <svg class="abs" style="left:148px;top:11px" width="28" height="34" viewBox="0 0 28 34">
  <defs><linearGradient id="gph" x1="0" y1="0" x2="0" y2="1"><stop offset="0" stop-color="#0c3a8a"/><stop offset="0.450" stop-color="#1c5aa6"/><stop offset="1" stop-color="#2a9aa6"/></linearGradient></defs>
  <path d="M13.700 0.800q9 0 12.300 6.200q0.800 2-0.800 4.500l-11.500 16l-11.500-16q-1.600-2.500-0.800-4.500q3.300-6.200 12.300-6.200z" fill="url(#gph)" stroke="#0a1c3a" stroke-width="1"/>
  <path d="M9.200 25.500h9l-4.500 7.500z" fill="#d01030"/>
  </svg>
  <div class="abs" style="left:161px;top:40px;width:1px;height:240px;background:#d0202e"></div>

  <div class="abs" style="left:140px;top:274px;width:723px;height:6px;background:#2b627b;border-radius:0 3px 3px 0"></div>
  <div class="abs" style="left:140px;top:274px;width:262px;height:6px;background:#4b92ad;border-radius:0 3px 3px 0"></div>
  <div class="abs" style="left:863px;top:43px;width:6px;height:231px;background:#2b627b;border-radius:3px"></div>
  <div class="abs" style="left:863px;top:43px;width:6px;height:148px;background:#4b92ad;border-radius:3px"></div>

</div>
<svg class="abs" style="left:874px;top:729px" width="12" height="12" viewBox="0 0 12 12"><g fill="#7c7c7c"><rect x="10" y="1" width="2" height="2"/><rect x="10" y="4" width="2" height="2"/><rect x="7" y="4" width="2" height="2"/><rect x="10" y="7" width="2" height="2"/><rect x="7" y="7" width="2" height="2"/><rect x="4" y="7" width="2" height="2"/><rect x="10" y="10" width="2" height="2"/><rect x="7" y="10" width="2" height="2"/><rect x="4" y="10" width="2" height="2"/><rect x="1" y="10" width="2" height="2"/></g></svg>
</body>
</html>
